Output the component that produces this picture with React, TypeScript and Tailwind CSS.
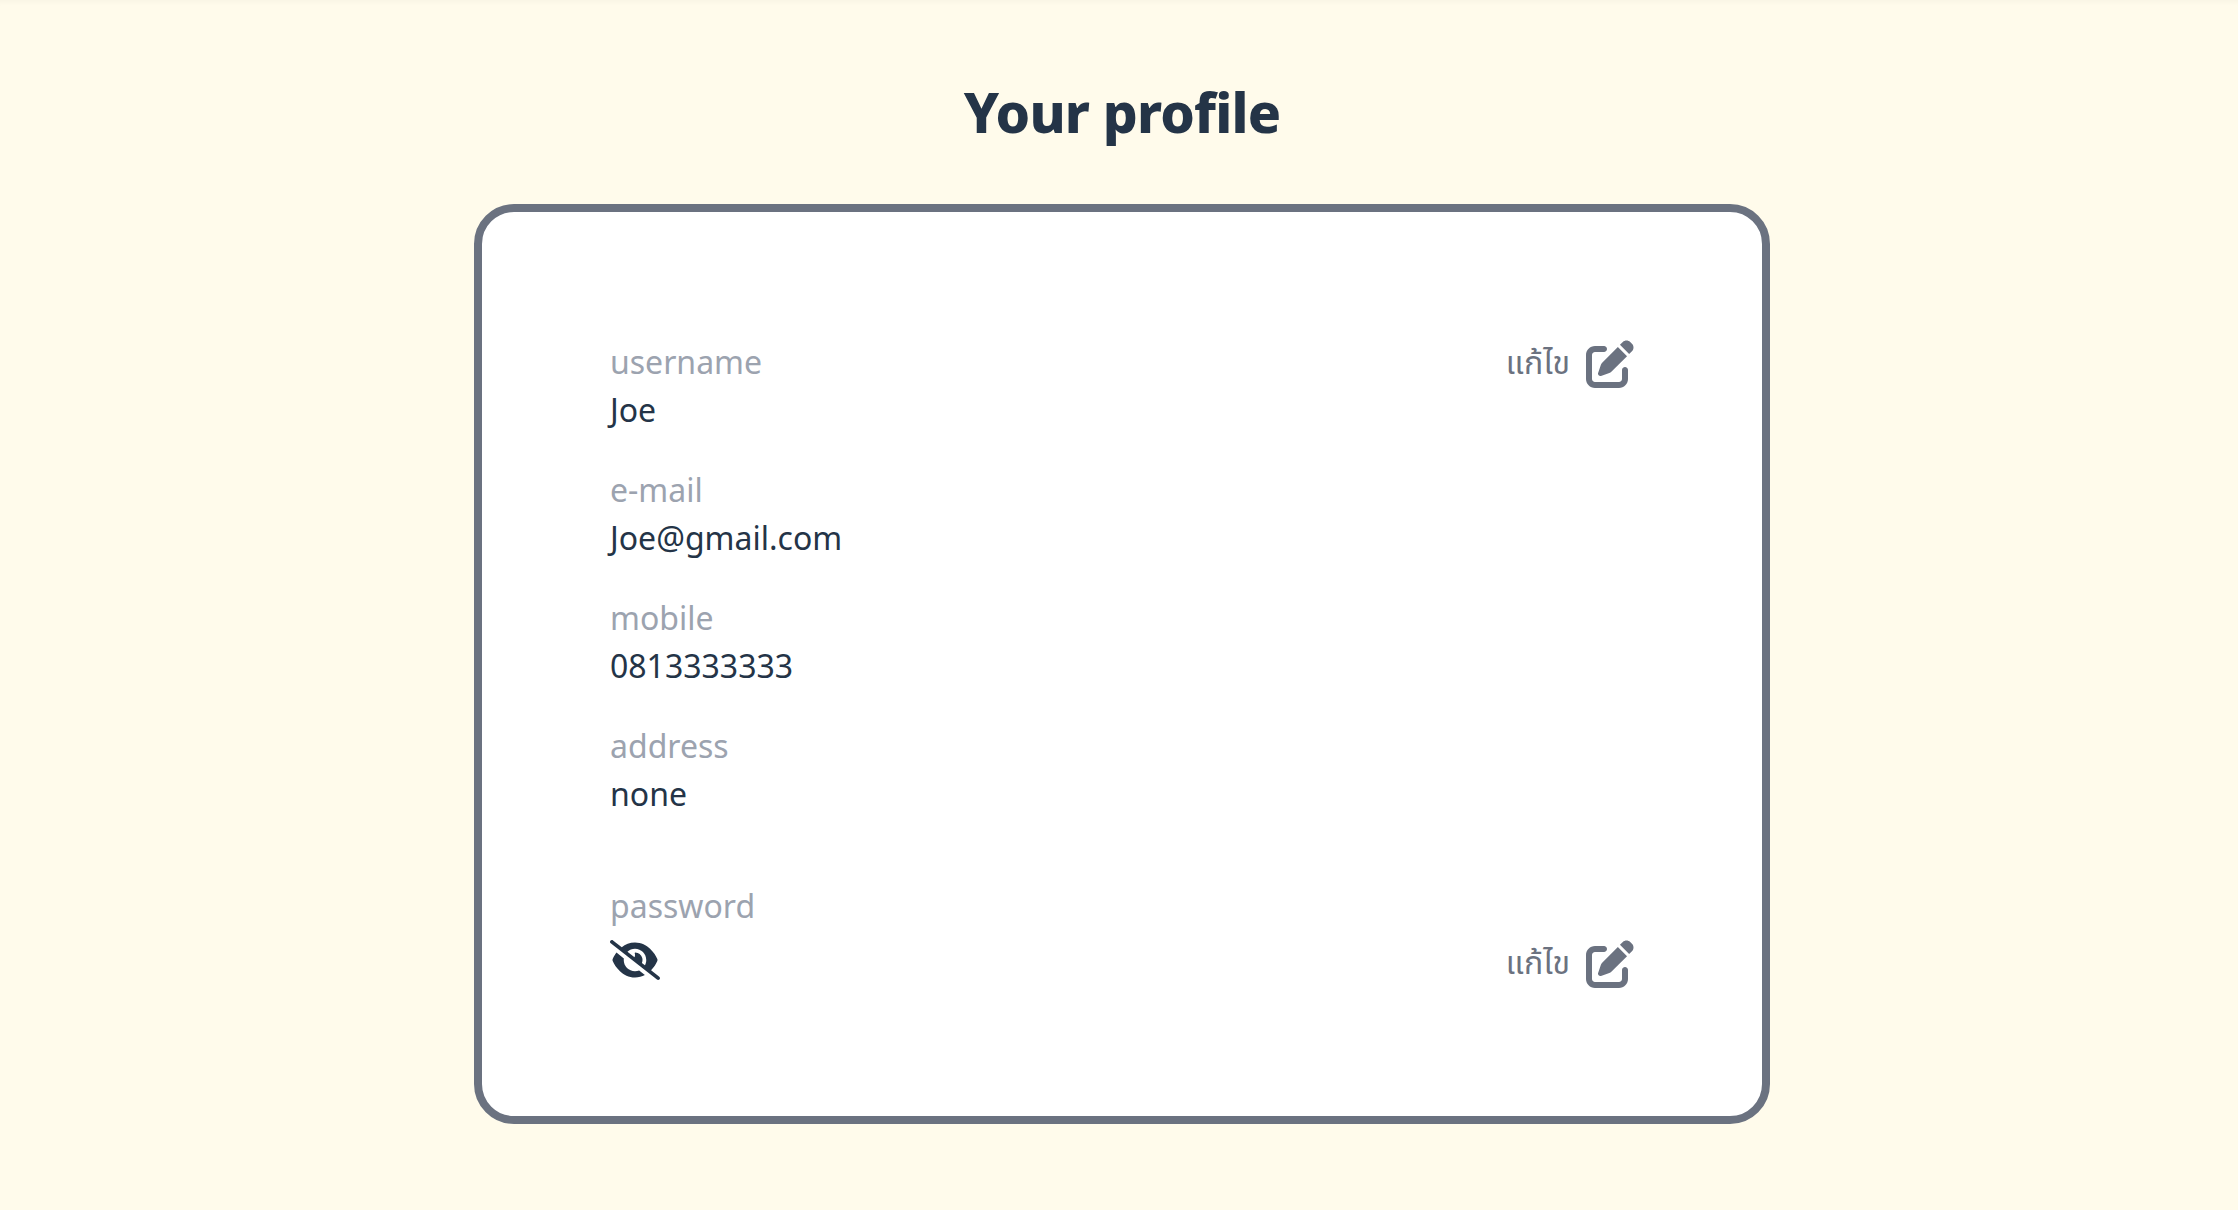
import { FaEyeSlash, FaPenToSquare } from "react-icons/fa6";

const fields = [
  { label: "username", value: "Joe" },
  { label: "e-mail", value: "Joe@gmail.com" },
  { label: "mobile", value: "0813333333" },
  { label: "address", value: "none" },
];

function EditButton() {
  return (
    <button className="flex h-12 items-center gap-4 text-[#6b7280]">
      <span className="-mt-1 text-[32px] leading-[48px]">แก้ไข</span>
      <FaPenToSquare className="size-12" />
    </button>
  );
}

export default function App() {
  return (
    <div className="flex h-[1210px] flex-col items-center overflow-hidden bg-[#fffbeb] pl-[6px] font-['Noto_Sans','Noto_Sans_Thai',sans-serif] text-[#243447] shadow-[inset_0_6px_6px_-5px_rgba(0,0,0,0.04)]">
      <h1 className="mt-[72px] mb-[52px] h-20 text-[55px] leading-20 font-extrabold tracking-[-0.8px]">Your profile</h1>
      <main className="flex h-[920px] w-[1296px] flex-col gap-16 rounded-[40px] border-8 border-[#6b7280] bg-white p-32 text-[32px] leading-[48px]">
        <section className="flex h-[480px] items-start justify-between">
          <dl className="-mt-0.5 flex flex-col gap-8">
            {fields.map((field) => (
              <div key={field.label}>
                <dt className="text-[#9ca3af]">{field.label}</dt>
                <dd>{field.value}</dd>
              </div>
            ))}
          </dl>
          <EditButton />
        </section>
        <section className="flex items-end justify-between">
          <div className="h-[106px]">
            <p className="text-[#9ca3af]">password</p>
            <FaEyeSlash className="mt-2.5 h-10 w-[50px]" />
          </div>
          <EditButton />
        </section>
      </main>
    </div>
  );
}
